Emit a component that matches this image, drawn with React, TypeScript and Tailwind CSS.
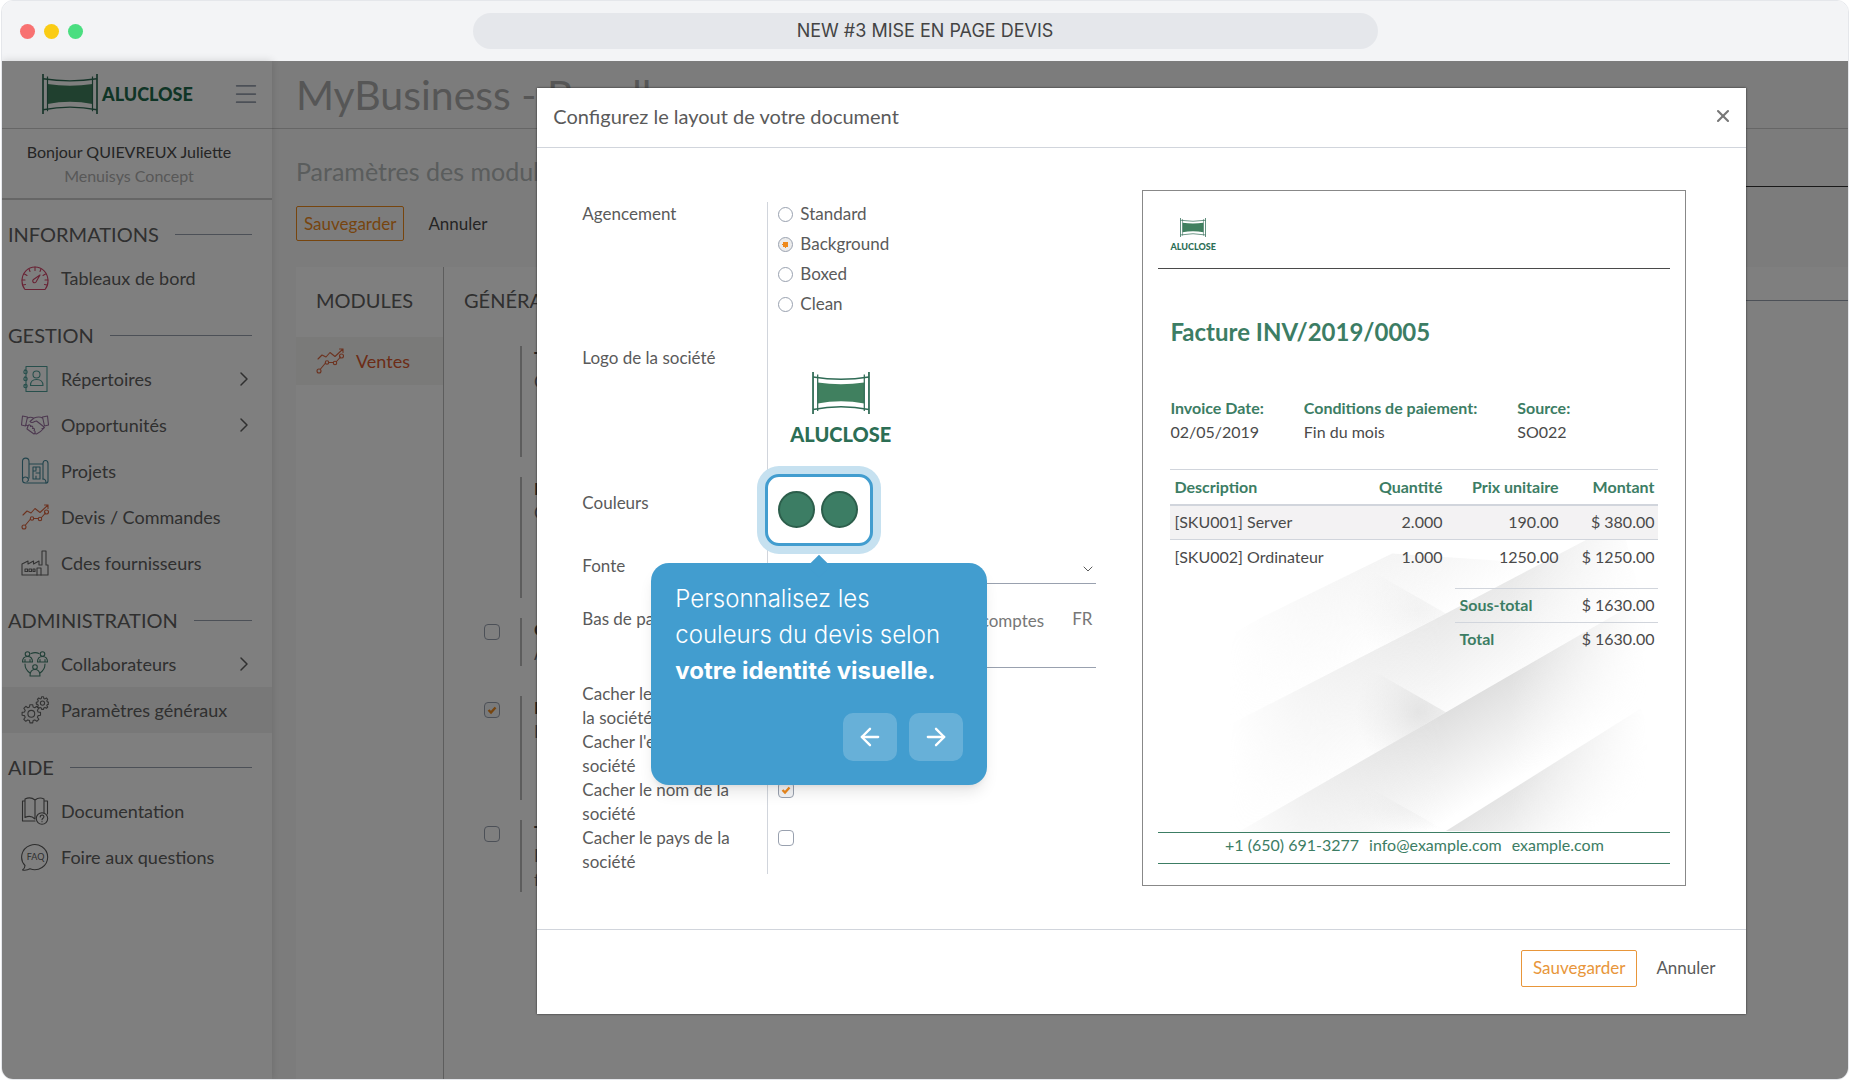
import type { ReactNode } from 'react';
import { ArrowLeft, ArrowRight, ChevronDown, ChevronRight, Menu, X } from 'lucide-react';

function Frame({ className }: { className: string }) {
  return (
    <svg className={className} viewBox="0 0 56 42" preserveAspectRatio="none" fill="none" stroke="#2f6b55">
      <path d="M5.5 10.5Q28 14 50.500 10.500V31.500Q28 27 5.500 31.500Z" fill="#40805f" stroke="none" />
      <path d="M1 0V42M55 0V42" strokeWidth="1.700" />
      <path d="M5.500 2.500V39M50.500 2.500V39" strokeWidth="1.200" />
      <path d="M1 5Q28 9.500 55 5M1 37.500Q28 32 55 37.500" strokeWidth="1.500" />
    </svg>
  );
}

function Icon({ className, children }: { className: string; children: ReactNode }) {
  return (
    <svg
      className={`size-7 shrink-0 ${className}`}
      viewBox="0 0 28 28"
      fill="none"
      stroke="currentColor"
      strokeWidth="1.1"
      strokeLinecap="round"
      strokeLinejoin="round"
    >
      {children}
    </svg>
  );
}

const GaugeIcon = () => (
  <Icon className="text-[#d1476a]">
    <path d="M4 25.500C1.800 23 1 20.300 1 17C1 8.500 7 3 14 3s13 5.500 13 14c0 3.300-.8 6-3 8.500Z" />
    <path d="M14 3v3.500M8 5l1 2.500M3.500 10l2.500 1.500M1 16h3M2 21l2.500-.5M20 5l-1 2.500M24.500 10L22 11.500M27 16h-3M26 21l-2.500-.5" />
    <path d="M19 11l-6.500 4.500a1.800 1.800 0 1 0 2.500 2.500Z" />
  </Icon>
);

const ContactsIcon = () => (
  <Icon className="text-[#4f9f99]">
    <path d="M5 1.500h21v25H5ZM5 5H3.500M5 12H3.500M5 20H3.500" />
    <circle cx="4.500" cy="7" r="1.700" />
    <circle cx="4.500" cy="14" r="1.700" />
    <circle cx="4.500" cy="21" r="1.700" />
    <circle cx="15.500" cy="9.500" r="3.500" />
    <path d="M9.500 20.500c0-4 1.500-6 6-6s6.500 2 6.500 6Z" />
  </Icon>
);

const HandshakeIcon = () => (
  <Icon className="text-[#9a72a0]">
    <path d="M1.500 5l5 1-2 9-4-1ZM26.500 5l-5 1 2 9 4-1Z" />
    <path d="M6.500 7c2-1 4-1 6 0M21.500 7c-3-2-6-1-8.500 0l-4 3.500c1 1.500 3 1.200 4.500 0l2-.5 7 5.500c1 1 0 2.500-1.500 2" />
    <path d="M5 14l2 1c1-2 3-1 2.500.5 2-1 3 .5 2 2 2-.5 2.500 1 1.500 2.200 1.500 0 1.500 1.800.5 2.800l2 .5c2-1 6-4 8-6.500M7 15l-1 3 7 5" />
  </Icon>
);

const BlueprintIcon = () => (
  <Icon className="text-[#45899a]">
    <path d="M1.500 23V4.500C1.500 0 8 0 8 4.500V21M8 7h14M22 22V6.500c0-4 5-4 5 0V24a2 2 0 0 1-2 2H4.500c-4 0-4-6 0-6 3 0 4 4 1.500 4.500" />
    <path d="M12 10h7v12h-7ZM12 14h3M19 16h-4M15 10v3M15 19v3M22 22c2 0 3 1 3 4" />
  </Icon>
);

const TrendIcon = () => (
  <Icon className="text-[#d9653f]">
    <path d="M2 12l4-4 4 2 4-4.500 5 4L27 2M23.500 2H27v3.500M4.500 22l5-6M12.500 15.500h5M20.500 14.500l4-4.500" />
    <circle cx="3" cy="24" r="2" />
    <circle cx="11" cy="15.500" r="1.700" />
    <circle cx="19" cy="16" r="1.700" />
    <circle cx="25.500" cy="9" r="2" />
  </Icon>
);

const FactoryIcon = () => (
  <Icon className="text-[#666]">
    <path d="M1 26V15l6-3v3l5.500-3v3l5.500-3v4h3V2h4v14h2v10Z" />
    <path d="M4 20h2.500v2.500H4ZM8 20h2.500v2.500H8ZM12 20h2v2.500h-2ZM16 26v-7h4v7" />
  </Icon>
);

const TeamIcon = () => (
  <Icon className="text-[#43806f]">
    <path d="M10 3.500c2.500-1 6-1 8 0M4 14c0 4 2 7 5 9M24 14c0 4-2 7-5 9" />
    <circle cx="6.500" cy="4" r="2.300" />
    <circle cx="21.500" cy="4" r="2.300" />
    <circle cx="14" cy="17" r="2.300" />
    <path d="M1.500 12c0-4 2-5.500 5-5.500s5 1.500 5 5.500ZM16.500 12c0-4 2-5.500 5-5.500s5 1.500 5 5.500ZM9 26c0-4.500 2-6.500 5-6.500s5 2 5 6.500ZM4 12V9.500M9 12V9.500M19 12V9.500M24 12V9.500" />
  </Icon>
);

const GearsIcon = () => (
  <Icon className="text-[#666]">
    <path d="M8.500 11l.4-2.300h2.800l.4 2.300 1.700.7 2-1.400 2 2-1.400 2 .7 1.700 2.400.4v2.800l-2.400.4-.7 1.700 1.400 2-2 2-2-1.400-1.700.7-.4 2.300H8.900l-.4-2.300-1.700-.7-2 1.400-2-2 1.400-2-.7-1.700-2.400-.4v-2.800l2.400-.4.7-1.700-1.400-2 2-2 2 1.400Z" />
    <circle cx="10.300" cy="17.800" r="3.400" />
    <path d="M20.300 2.400l.3-1.600h1.900l.3 1.600 1.200.5 1.400-.9 1.300 1.300-.9 1.400.5 1.200 1.500.3v1.900l-1.500.3-.5 1.200.9 1.400-1.300 1.300-1.400-.9-1.200.5-.3 1.500h-1.900l-.3-1.500-1.200-.5-1.400.9-1.300-1.300.9-1.400-.5-1.200-1.500-.3V6.200l1.500-.3.5-1.200-.9-1.400 1.300-1.300 1.400.9Z" />
    <circle cx="21.500" cy="7.100" r="2.100" />
  </Icon>
);

const BookIcon = () => (
  <Icon className="text-[#5c5c5c]">
    <path d="M14 22V3c-3-2.500-7-2.500-10-1v18.500c3-1.500 7-1.500 10 1.500M14 3c3-2.500 6-2.500 9-1v14M4 4H1.500v20H14M23 4h3.500v13" />
    <circle cx="21" cy="21.500" r="5.700" />
    <path d="M19.200 20c0-2.800 4-2.500 3.700 0-.3 1.300-1.900 1.200-1.900 2.800M21 24.500v.2" />
  </Icon>
);

const FaqIcon = () => (
  <Icon className="text-[#5c5c5c]">
    <path d="M4 22.500A13 12.500 0 1 1 9 25.800C7 27 4.500 27.500 1.500 27c1.500-1 2.500-2.500 2.500-4.500Z" />
    <text x="14.500" y="17" textAnchor="middle" className="font-['Lato'] text-[9px]" fill="currentColor" stroke="none">
      FAQ
    </text>
  </Icon>
);

type Item = { label: string; icon: ReactNode; more?: boolean; active?: boolean };

const sections: { title: string; items: Item[] }[] = [
  { title: 'INFORMATIONS', items: [{ label: 'Tableaux de bord', icon: <GaugeIcon /> }] },
  {
    title: 'GESTION',
    items: [
      { label: 'Répertoires', icon: <ContactsIcon />, more: true },
      { label: 'Opportunités', icon: <HandshakeIcon />, more: true },
      { label: 'Projets', icon: <BlueprintIcon /> },
      { label: 'Devis / Commandes', icon: <TrendIcon /> },
      { label: 'Cdes fournisseurs', icon: <FactoryIcon /> },
    ],
  },
  {
    title: 'ADMINISTRATION',
    items: [
      { label: 'Collaborateurs', icon: <TeamIcon />, more: true },
      { label: 'Paramètres généraux', icon: <GearsIcon />, active: true },
    ],
  },
  {
    title: 'AIDE',
    items: [
      { label: 'Documentation', icon: <BookIcon /> },
      { label: 'Foire aux questions', icon: <FaqIcon /> },
    ],
  },
];

const settings = [
  { title: 'Taxes', text: 'Choix', size: 'h-[111px]' },
  { title: 'Remises', text: 'Choix', size: 'h-[121px]' },
  { title: 'CGV', text: 'Ajout', size: 'h-12 mb-2.5', checked: false },
  { title: 'Devis', text: 'Lien', size: 'h-[104px]', checked: true },
  { title: 'Tarifs', text: 'Prix\nfixes', size: 'h-[72px]', checked: false },
];

function Check({ id, label, checked }: { id: string; label?: string; checked?: boolean }) {
  return (
    <span className="relative inline-flex size-4 shrink-0">
      <input
        id={id}
        type="checkbox"
        aria-label={label}
        defaultChecked={checked}
        className="peer size-4 appearance-none rounded border border-gray-400 bg-white checked:bg-gray-100"
      />
      <svg
        className="pointer-events-none absolute inset-0 hidden size-4 peer-checked:block"
        viewBox="0 0 16 16"
        fill="none"
        stroke="#ee8a1d"
        strokeWidth="2.400"
      >
        <path d="M4.500 8l2.500 2.500L11.500 5.500" />
      </svg>
    </span>
  );
}

function Sidebar() {
  return (
    <aside className="z-10 w-[270px] shrink-0 bg-white shadow-[0_0_8px_rgba(0,0,0,0.15)]">
      <div className="flex h-17 items-center border-b border-[#ccc] pr-3 pb-0.5 pl-10">
        <Frame className="h-10 w-14" />
        <span className="ml-1 text-lg font-black text-[#1f6b4c]">ALUCLOSE</span>
        <button type="button" aria-label="Menu" className="ml-auto text-gray-400">
          <Menu className="size-7" strokeWidth={1.500} />
        </button>
      </div>
      <div className="flex h-[71px] flex-col items-center justify-center border-b-2 border-[#ccc] pr-4 text-base leading-6">
        <span className="text-[#4a4a4a]">Bonjour QUIEVREUX Juliette</span>
        <span className="text-[#b0b0b0]">Menuisys Concept</span>
      </div>
      <nav>
        {sections.map((s) => (
          <div key={s.title}>
            <div className="flex items-center gap-4 pt-5 pr-5 pb-[7px] pl-1.5">
              <h3 className="text-xl leading-7 text-[#606060]">{s.title}</h3>
              <div className="h-px flex-1 bg-gray-400" />
            </div>
            {s.items.map((it) => (
              <a
                key={it.label}
                href="#"
                className={`flex h-[46px] items-center gap-3 pr-5 pb-px pl-[19px] text-lg text-[#606060] ${it.active ? 'bg-[#f0f0f0]' : ''}`}
              >
                {it.icon}
                {it.label}
                {it.more && <ChevronRight className="-mr-1 ml-auto size-6" strokeWidth={1.500} />}
              </a>
            ))}
          </div>
        ))}
      </nav>
    </aside>
  );
}

function Page() {
  return (
    <main className="flex min-w-0 flex-1 flex-col bg-[#f9f9f9]">
      <div className="flex h-17 items-center border-b border-[#ccc] pl-6">
        <h1 className="text-[41px] text-[#acacac]">MyBusiness - Bundle</h1>
      </div>
      <div className="flex h-[138px] justify-between">
        <div className="pt-[26px] pl-6">
          <h2 className="text-[25px] leading-8 text-[#b4baba]">Paramètres des modules</h2>
          <div className="mt-[19px] flex items-center gap-6">
            <button type="button" className="h-[35px] rounded-xs border border-[#ee8a1d] px-[7px] text-[17px] text-[#ee8a1d]">
              Sauvegarder
            </button>
            <button type="button" className="text-[17px] text-[#4a4a4a]">
              Annuler
            </button>
          </div>
        </div>
        <div className="mt-[57px] h-px w-1/3 bg-[#333]" />
      </div>
      <div className="ml-6 flex flex-1 bg-white">
        <div className="w-[148px] border-r border-[#bbb]">
          <h3 className="flex h-[70px] items-center pb-1 pl-5 text-xl text-[#606060]">MODULES</h3>
          <a href="#" className="flex h-12 items-center gap-3 bg-[#f4f4f2] pl-5 text-lg text-[#d9592f]">
            <TrendIcon />
            Ventes
          </a>
        </div>
        <div className="min-w-0 flex-1">
          <div className="flex h-[70px] items-center gap-4 pb-1 pl-5">
            <h3 className="text-xl text-[#606060]">GÉNÉRAL</h3>
            <div className="h-px flex-1 bg-gray-400" />
          </div>
          <div className="flex flex-col gap-5 pt-[9px] pl-10">
            {settings.map((s) => (
              <div key={s.title} className={`flex ${s.size}`}>
                <div className="w-9 pt-1">
                  {s.checked !== undefined && <Check id={s.title} label={s.title} checked={s.checked} />}
                </div>
                <div className="border-l-2 border-[#bbb] pl-3">
                  <p className="text-[17px] leading-6 font-bold text-[#4a4a4a]">{s.title}</p>
                  <p className="text-[17px] leading-6 whitespace-pre-line text-gray-500">{s.text}</p>
                </div>
              </div>
            ))}
          </div>
        </div>
      </div>
    </main>
  );
}

function Tour() {
  return (
    <div className="absolute top-[86px] left-1/2 z-20 w-[336px] -translate-x-1/2 rounded-[18px] bg-[#429dcf] px-6 pt-[18px] pb-6 shadow-lg">
      <div className="absolute -top-[5px] left-1/2 -ml-2 size-4 rotate-45 bg-[#429dcf]" />
      <p className="relative font-['Inter'] text-2xl leading-9 font-light text-white">
        Personnalisez les
        <br />
        couleurs du devis selon
        <br />
        <b className="font-bold">votre identité visuelle.</b>
      </p>
      <div className="mt-6 flex justify-end gap-3">
        <button type="button" aria-label="Précédent" className="flex h-12 w-[54px] items-center justify-center rounded-[10px] bg-white/20 text-white">
          <ArrowLeft className="size-7" />
        </button>
        <button type="button" aria-label="Suivant" className="flex h-12 w-[54px] items-center justify-center rounded-[10px] bg-white/20 text-white">
          <ArrowRight className="size-7" />
        </button>
      </div>
    </div>
  );
}

function Row({ label, id, className, children }: { label: string; id?: string; className: string; children?: ReactNode }) {
  return (
    <div className={`flex ${className}`}>
      <label htmlFor={id} className="w-[185px] shrink-0 whitespace-pre-line">
        {label}
      </label>
      <div className="min-w-0 flex-1 border-l border-gray-300 pl-2.5">{children}</div>
    </div>
  );
}

function LayoutForm() {
  return (
    <form className="pt-3 text-[17px] leading-6 text-[#5a5a5a]">
      <Row label="Agencement" className="h-36">
        <div className="flex flex-col gap-1.5">
          {['Standard', 'Background', 'Boxed', 'Clean'].map((name) => (
            <label key={name} className="flex items-center gap-[7px]">
              <input
                type="radio"
                name="layout"
                defaultChecked={name === 'Background'}
                className="size-[15px] appearance-none rounded-full border border-gray-400 bg-white checked:bg-[radial-gradient(circle,#ee8a1d_0_3px,#ececec_3px)]"
              />
              {name}
            </label>
          ))}
        </div>
      </Row>
      <Row label="Logo de la société" className="h-[145px]">
        <div className="flex w-fit flex-col items-center pt-[26px] pl-3">
          <Frame className="h-[42px] w-[58px]" />
          <span className="mt-1.5 text-xl font-black text-[#2c6e55]">ALUCLOSE</span>
        </div>
      </Row>
      <Row label="Couleurs" className="h-[63px]">
        <div className="relative flex w-fit gap-1.5">
          <div className="absolute -top-[17px] -right-[15px] -bottom-[18px] -left-[13px] rounded-[14px] border-3 border-[#429dcf] bg-white ring-8 ring-[#c6e1f0]">
            <Tour />
          </div>
          <button type="button" aria-label="Couleur principale" className="relative size-[37px] rounded-full border-2 border-[#2c5e4b] bg-[#3c7d64]" />
          <button type="button" aria-label="Couleur secondaire" className="relative size-[37px] rounded-full border-2 border-[#2c5e4b] bg-[#3c7d64]" />
        </div>
      </Row>
      <Row label="Fonte" id="font" className="h-[53px]">
        <div className="relative flex items-center border-b border-gray-400">
          <select id="font" className="h-[29px] w-full appearance-none pt-2">
            <option>Lato</option>
          </select>
          <ChevronDown className="pointer-events-none absolute right-0 size-4" strokeWidth={1.500} />
        </div>
      </Row>
      <Row label="Bas de page" id="footer" className="h-[75px]">
        <div className="flex h-[61px] border-b border-gray-400 pr-1">
          <textarea
            id="footer"
            className="min-w-0 flex-1 resize-none overflow-hidden pt-0.5 pr-7 text-right text-[#777]"
            defaultValue="Texte et informations des comptes"
          />
          <span className="text-[#777]">FR</span>
        </div>
      </Row>
      <Row label={'Cacher le logo de\nla société'} id="hide-logo" className="h-12">
        <Check id="hide-logo" />
      </Row>
      <Row label={"Cacher l'entête de la\nsociété"} id="hide-header" className="h-12">
        <Check id="hide-header" />
      </Row>
      <Row label={'Cacher le nom de la\nsociété'} id="hide-name" className="h-12 *:last:pt-0.5">
        <Check id="hide-name" checked />
      </Row>
      <Row label={'Cacher le pays de la\nsociété'} id="hide-country" className="h-12 *:last:pt-0.5">
        <Check id="hide-country" />
      </Row>
    </form>
  );
}

// Overlapping paper sheets, one shade under each diagonal edge
function Pattern() {
  return (
    <svg className="absolute inset-0 size-full" viewBox="0 0 544 695" preserveAspectRatio="none">
      <defs>
        <linearGradient id="s1" gradientUnits="userSpaceOnUse" x1="200" y1="385" x2="244" y2="463">
          <stop stopColor="#f1f1f1" />
          <stop offset="1" stopColor="#f1f1f1" stopOpacity="0" />
        </linearGradient>
        <linearGradient id="s2" gradientUnits="userSpaceOnUse" x1="304" y1="423" x2="348" y2="505">
          <stop stopColor="#e9e9e9" />
          <stop offset="1" stopColor="#e9e9e9" stopOpacity="0.1" />
        </linearGradient>
        <linearGradient id="s3" gradientUnits="userSpaceOnUse" x1="304" y1="522" x2="352" y2="604">
          <stop stopColor="#dfdfdf" />
          <stop offset="1" stopColor="#dfdfdf" stopOpacity="0" />
        </linearGradient>
        <linearGradient id="s4" gradientUnits="userSpaceOnUse" x1="400" y1="580" x2="442" y2="646">
          <stop stopColor="#e4e4e4" />
          <stop offset="1" stopColor="#e4e4e4" stopOpacity="0" />
        </linearGradient>
        <radialGradient id="corner" cx="0.75" cy="0.4" r="0.55">
          <stop stopColor="#dcdcdc" stopOpacity="0.8" />
          <stop offset="1" stopColor="#dcdcdc" stopOpacity="0" />
        </radialGradient>
        <linearGradient id="sides">
          <stop offset="0.16" stopColor="#000" />
          <stop offset="0.3" stopColor="#777" />
          <stop offset="0.55" stopColor="#fff" />
          <stop offset="0.68" stopColor="#fff" />
          <stop offset="0.93" stopColor="#000" />
        </linearGradient>
        <mask id="fade">
          <rect width="544" height="643" fill="url(#sides)" />
        </mask>
      </defs>
      <g mask="url(#fade)">
        <path d="M80 449L119 427L250 363L399 373L304 423L80 538Z" fill="url(#s1)" />
        <path d="M304 423L225 378L190 481Z" fill="url(#corner)" opacity="0.4" />
        <path d="M80 538L304 423L480 331L500 409L304 522L80 651Z" fill="url(#s2)" />
        <path d="M304 522L225 477L190 588Z" fill="url(#corner)" />
        <path d="M80 651L304 522L500 409L540 493L304 640V643H80Z" fill="url(#s3)" />
        <path d="M304 641L225 596L180 643Z" fill="url(#corner)" opacity="0.4" />
        <path d="M304 641L500 518L540 643Z" fill="url(#s4)" />
      </g>
    </svg>
  );
}

function Invoice() {
  return (
    <section className="relative flex h-[696px] flex-col border border-[#888] bg-white px-[15px] text-base leading-6 text-[#4a4a4a]">
      <Pattern />
      <div className="relative flex h-[78px] border-b border-[#4a4a4a] pt-[27px] pl-3">
        <div className="flex h-fit flex-col items-center">
          <Frame className="h-[19px] w-[26px]" />
          <span className="mt-1 text-[9px] leading-3 font-black text-[#2c6e55]">ALUCLOSE</span>
        </div>
      </div>
      <div className="relative flex-1 px-3">
        <h2 className="pt-[45px] text-2xl leading-9 font-bold text-[#3c7d64]">Facture INV/2019/0005</h2>
        <dl className="mt-[46px] flex gap-10">
          <div>
            <dt className="font-bold text-[#3c7d64]">Invoice Date:</dt>
            <dd>02/05/2019</dd>
          </div>
          <div>
            <dt className="font-bold text-[#3c7d64]">Conditions de paiement:</dt>
            <dd>Fin du mois</dd>
          </div>
          <div>
            <dt className="font-bold text-[#3c7d64]">Source:</dt>
            <dd>SO022</dd>
          </div>
        </dl>
        <table className="mt-[25px] w-full text-right whitespace-nowrap">
          <thead>
            <tr className="h-[35px] border-t border-b-2 border-gray-300 text-[#3c7d64]">
              <th className="pl-1 text-left">Description</th>
              <th className="w-24">Quantité</th>
              <th className="w-[116px]">Prix unitaire</th>
              <th className="w-[100px] pr-1">Montant</th>
            </tr>
          </thead>
          <tbody>
            <tr className="h-[35px] border-b border-gray-300 bg-[#f3f2f3]">
              <td className="pl-1 text-left">[SKU001] Server</td>
              <td>2.000</td>
              <td>190.00</td>
              <td className="pr-1">$ 380.00</td>
            </tr>
            <tr className="h-[34px]">
              <td className="pl-1 text-left">[SKU002] Ordinateur</td>
              <td>1.000</td>
              <td>1250.00</td>
              <td className="pr-1">$ 1250.00</td>
            </tr>
          </tbody>
        </table>
        <table className="mt-3.5 ml-auto w-[203px]">
          <tbody>
            <tr className="h-[34px] border-t border-gray-300">
              <th className="pl-1 text-left text-[#3c7d64]">Sous-total</th>
              <td className="pr-1 text-right">$ 1630.00</td>
            </tr>
            <tr className="h-[34px] border-t border-gray-300">
              <th className="pl-1 text-left text-[#3c7d64]">Total</th>
              <td className="pr-1 text-right">$ 1630.00</td>
            </tr>
          </tbody>
        </table>
      </div>
      <div className="relative mb-[21px] flex h-8 justify-center gap-2.5 border-y border-[#3c7d64] text-[#3c7d64]">
        <span>+1 (650) 691-3277</span>
        <span>info@example.com</span>
        <span>example.com</span>
      </div>
    </section>
  );
}

function Modal() {
  return (
    <div className="absolute inset-0 z-20 bg-black/50">
      <div role="dialog" aria-label="Layout du document" className="mt-[27px] mr-[5.5%] ml-[29%] bg-white text-[#5a5a5a] shadow-[0_0_2px_rgba(0,0,0,0.7)]">
        <div className="flex h-15 items-center justify-between border-b border-gray-300 pr-[13px] pb-1 pl-4">
          <h2 className="text-xl">Configurez le layout de votre document</h2>
          <button type="button" aria-label="Fermer" className="text-[#777]">
            <X className="size-5" strokeWidth={2.500} />
          </button>
        </div>
        <div className="grid grid-cols-[514fr_544fr] gap-x-[46px] pt-[42px] pr-15 pb-[43px] pl-[45px]">
          <LayoutForm />
          <Invoice />
        </div>
        <div className="flex h-[85px] items-center justify-end gap-[19px] border-t border-gray-300 pr-[31px] pb-2 text-[17px]">
          <button type="button" className="h-[37px] rounded-xs border border-[#e8963a] px-[11px] text-[#e8963a]">
            Sauvegarder
          </button>
          <button type="button">Annuler</button>
        </div>
      </div>
    </div>
  );
}

export default function App() {
  return (
    <div className="flex min-h-screen flex-col bg-white px-px font-['Lato',sans-serif]">
      <div className="flex flex-1 flex-col overflow-hidden rounded-xl border border-gray-200">
        <header className="flex h-15 items-center bg-gray-100 px-[18px]">
          <div className="flex flex-1 gap-[9px]">
            <span className="size-[15px] rounded-full bg-[#f87171]" />
            <span className="size-[15px] rounded-full bg-[#facc15]" />
            <span className="size-[15px] rounded-full bg-[#4ade80]" />
          </div>
          <div className="flex h-9 w-1/2 items-center justify-center rounded-full bg-gray-200 font-['Inter'] text-lg text-[#444]">
            NEW #3 MISE EN PAGE DEVIS
          </div>
          <div className="flex-1" />
        </header>
        <div className="relative flex flex-1">
          <Sidebar />
          <Page />
          <Modal />
        </div>
      </div>
    </div>
  );
}
